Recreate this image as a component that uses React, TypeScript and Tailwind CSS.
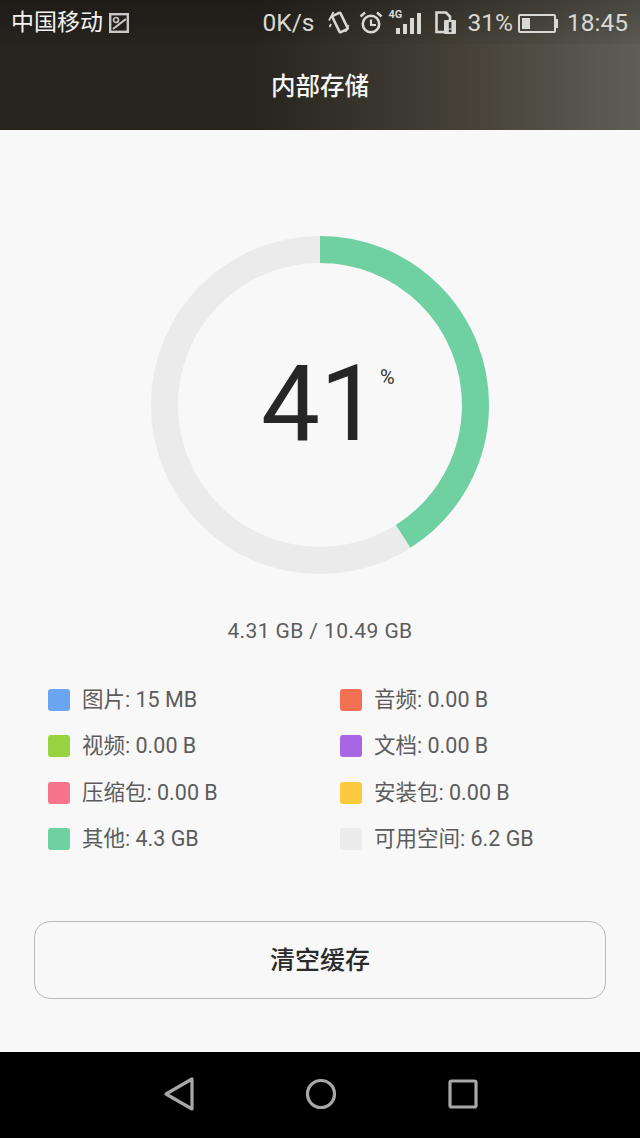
const items = [
  [
    { color: "bg-[#6aa5f2]", label: "图片: 15 MB" },
    { color: "bg-[#97d340]", label: "视频: 0.00 B" },
    { color: "bg-[#f8748a]", label: "压缩包: 0.00 B" },
    { color: "bg-[#6fd0a2]", label: "其他: 4.3 GB" },
  ],
  [
    { color: "bg-[#f2704f]", label: "音频: 0.00 B" },
    { color: "bg-[#a866e6]", label: "文档: 0.00 B" },
    { color: "bg-[#fdc93f]", label: "安装包: 0.00 B" },
    { color: "bg-[#ececec]", label: "可用空间: 6.2 GB" },
  ],
];

const RADIUS = 155.5;
const CIRC = 2 * Math.PI * RADIUS;

function StatusIcons() {
  return (
    <div className="flex items-center text-[#d8d8d4]">
      {/* rotate lock */}
      <svg width="22" height="24" viewBox="0 0 22 24" fill="none" stroke="currentColor" className="ml-[13px]">
        <rect x="7.5" y="2.5" width="9" height="18" rx="1" strokeWidth="2.6" transform="rotate(-26 12 11.5)" />
        <path d="M5.5 1 L1 9.5 M3 13 L1.5 16 M20.5 14 L17.5 21" strokeWidth="1.7" />
      </svg>
      {/* alarm */}
      <svg width="24" height="24" viewBox="0 0 24 24" fill="none" stroke="currentColor" className="ml-[9px]">
        <circle cx="12" cy="13" r="8.2" strokeWidth="2.6" />
        <path d="M12 8.5 V14 H17" strokeWidth="2.2" />
        <path d="M1.5 5.5 L6 1.5 M22.5 5.5 L18 1.5" strokeWidth="2.4" />
      </svg>
      {/* signal */}
      <div className="relative ml-[5px] h-[32px] w-[36px]">
        <span className="absolute left-[1px] top-[2px] text-[11px] leading-[12px] font-bold">4G</span>
        <div className="absolute bottom-[5px] left-[8px] flex items-end gap-[3.5px]">
          <div className="h-[6px] w-[4px] bg-[#d8d8d4]" />
          <div className="h-[10px] w-[3.5px] bg-[#d8d8d4]" />
          <div className="h-[16px] w-[3.5px] bg-[#d8d8d4]" />
          <div className="h-[21px] w-[3.5px] bg-[#d8d8d4]" />
        </div>
      </div>
      {/* sim warning */}
      <svg width="22" height="24" viewBox="0 0 22 24" className="ml-[11px]">
        <path d="M1.5 1.5 H11 L15 5.5 V21 H1.5 Z" fill="none" stroke="currentColor" strokeWidth="2.6" />
        <rect x="9" y="9" width="12" height="14" rx="1" fill="currentColor" />
        <rect x="13.8" y="11" width="2.6" height="6.5" fill="#38352e" />
        <rect x="13.8" y="18.5" width="2.6" height="2.6" fill="#38352e" />
      </svg>
      <span className="ml-[11px] text-[24.5px] leading-[44px]">31%</span>
      {/* battery */}
      <div className="ml-[5px] flex items-center">
        <div className="h-[19px] w-[38px] rounded-[2px] border-2 border-[#d8d8d4] p-[2px]">
          <div className="h-full w-[8px] bg-[#d8d8d4]" />
        </div>
        <div className="h-[9px] w-[2px] bg-[#d8d8d4]" />
      </div>
      <span className="ml-[9px] text-[24.5px] leading-[44px]">18:45</span>
    </div>
  );
}

export default function App() {
  return (
    <div className="flex h-[1138px] w-[640px] flex-col overflow-hidden bg-[#f8f8f8] font-['Roboto','Noto_Sans_CJK_SC',sans-serif]">
      {/* Header */}
      <div className="h-[130px] shrink-0 bg-gradient-to-r from-[#28251f] from-40% via-[#48443a] via-75% to-[#5f5e56]">
        <div className="flex h-[44px] items-center justify-between bg-gradient-to-b from-black/25 to-black/5 pl-[11px] pr-[12px] pt-[2px]">
          <div className="flex items-center text-[#f2f2f0]">
            <span className="text-[23px] leading-[44px]">中国移动</span>
            <svg width="20" height="20" viewBox="0 0 20 20" fill="none" stroke="currentColor" className="ml-[6px] opacity-80">
              <rect x="1.2" y="1.2" width="17.6" height="17.6" strokeWidth="2.4" />
              <circle cx="7" cy="7" r="2.5" strokeWidth="1.7" />
              <path d="M4 16 L17 6" strokeWidth="2.2" />
            </svg>
          </div>
          <div className="flex items-center">
            <span className="text-[24.5px] leading-[44px] text-[#d8d8d4]">0K/s</span>
            <StatusIcons />
          </div>
        </div>
        <div className="flex h-[86px] items-center justify-center text-[24.5px] font-medium text-[#f5f5f3]">
          内部存储
        </div>
      </div>

      {/* Content */}
      <div className="flex flex-1 flex-col items-center bg-[#f8f8f8]">
        <div className="relative mt-[106px] h-[338px] w-[338px] shrink-0">
          <svg width="338" height="338" viewBox="0 0 338 338">
            <circle cx="169" cy="169" r={RADIUS} fill="none" stroke="#ebebeb" strokeWidth="27" />
            <circle
              cx="169"
              cy="169"
              r={RADIUS}
              fill="none"
              stroke="#6fd0a2"
              strokeWidth="27"
              strokeDasharray={`${CIRC * 0.41} ${CIRC}`}
              transform="rotate(-90 169 169)"
            />
          </svg>
          <div className="absolute inset-0 flex items-center justify-center pb-[1px] text-[105px] leading-none text-[#262626]">
            41
          </div>
          <span className="absolute left-[229px] top-[131px] text-[20px] leading-none text-[#333333]">%</span>
        </div>

        <div className="mt-[44px] text-[21px] leading-[26px] tracking-[0.4px] text-[#5c5c5c]">4.31 GB / 10.49 GB</div>

        <div className="mt-[42px] flex w-full pl-[48px]">
          {items.map((col, i) => (
            <div key={i} className="flex w-[292px] flex-col gap-[18.3px]">
              {col.map((item) => (
                <div key={item.label} className="flex h-[28px] items-center">
                  <div className={`h-[22px] w-[22px] rounded-[3px] ${item.color}`} />
                  <span className="ml-[12px] text-[21.5px] leading-[28px] text-[#5c5c5c]">{item.label}</span>
                </div>
              ))}
            </div>
          ))}
        </div>

        <button className="mt-[68px] flex h-[78px] w-[572px] items-center justify-center rounded-[16px] border border-[#b8b8b8] bg-[#f8f8f8] pt-[2px] text-[25px] font-medium text-[#2a2a2a]">
          清空缓存
        </button>
      </div>

      {/* Nav bar */}
      <div className="flex h-[86px] shrink-0 bg-black">
        <div className="flex w-full items-center pb-[2px] text-[#a8a8a8]">
          <svg width="32" height="36" viewBox="0 0 32 36" fill="none" stroke="currentColor" strokeWidth="3.2" strokeLinejoin="round" className="ml-[163px]">
            <path d="M29 3 V33 L3 18 Z" />
          </svg>
          <svg width="32" height="32" viewBox="0 0 32 32" fill="none" stroke="currentColor" strokeWidth="3.2" className="ml-[110px]">
            <circle cx="16" cy="16" r="13.5" />
          </svg>
          <svg width="30" height="30" viewBox="0 0 30 30" fill="none" stroke="currentColor" strokeWidth="3.2" strokeLinejoin="round" className="ml-[111px]">
            <rect x="2" y="2" width="26" height="26" rx="1.5" />
          </svg>
        </div>
      </div>
    </div>
  );
}
